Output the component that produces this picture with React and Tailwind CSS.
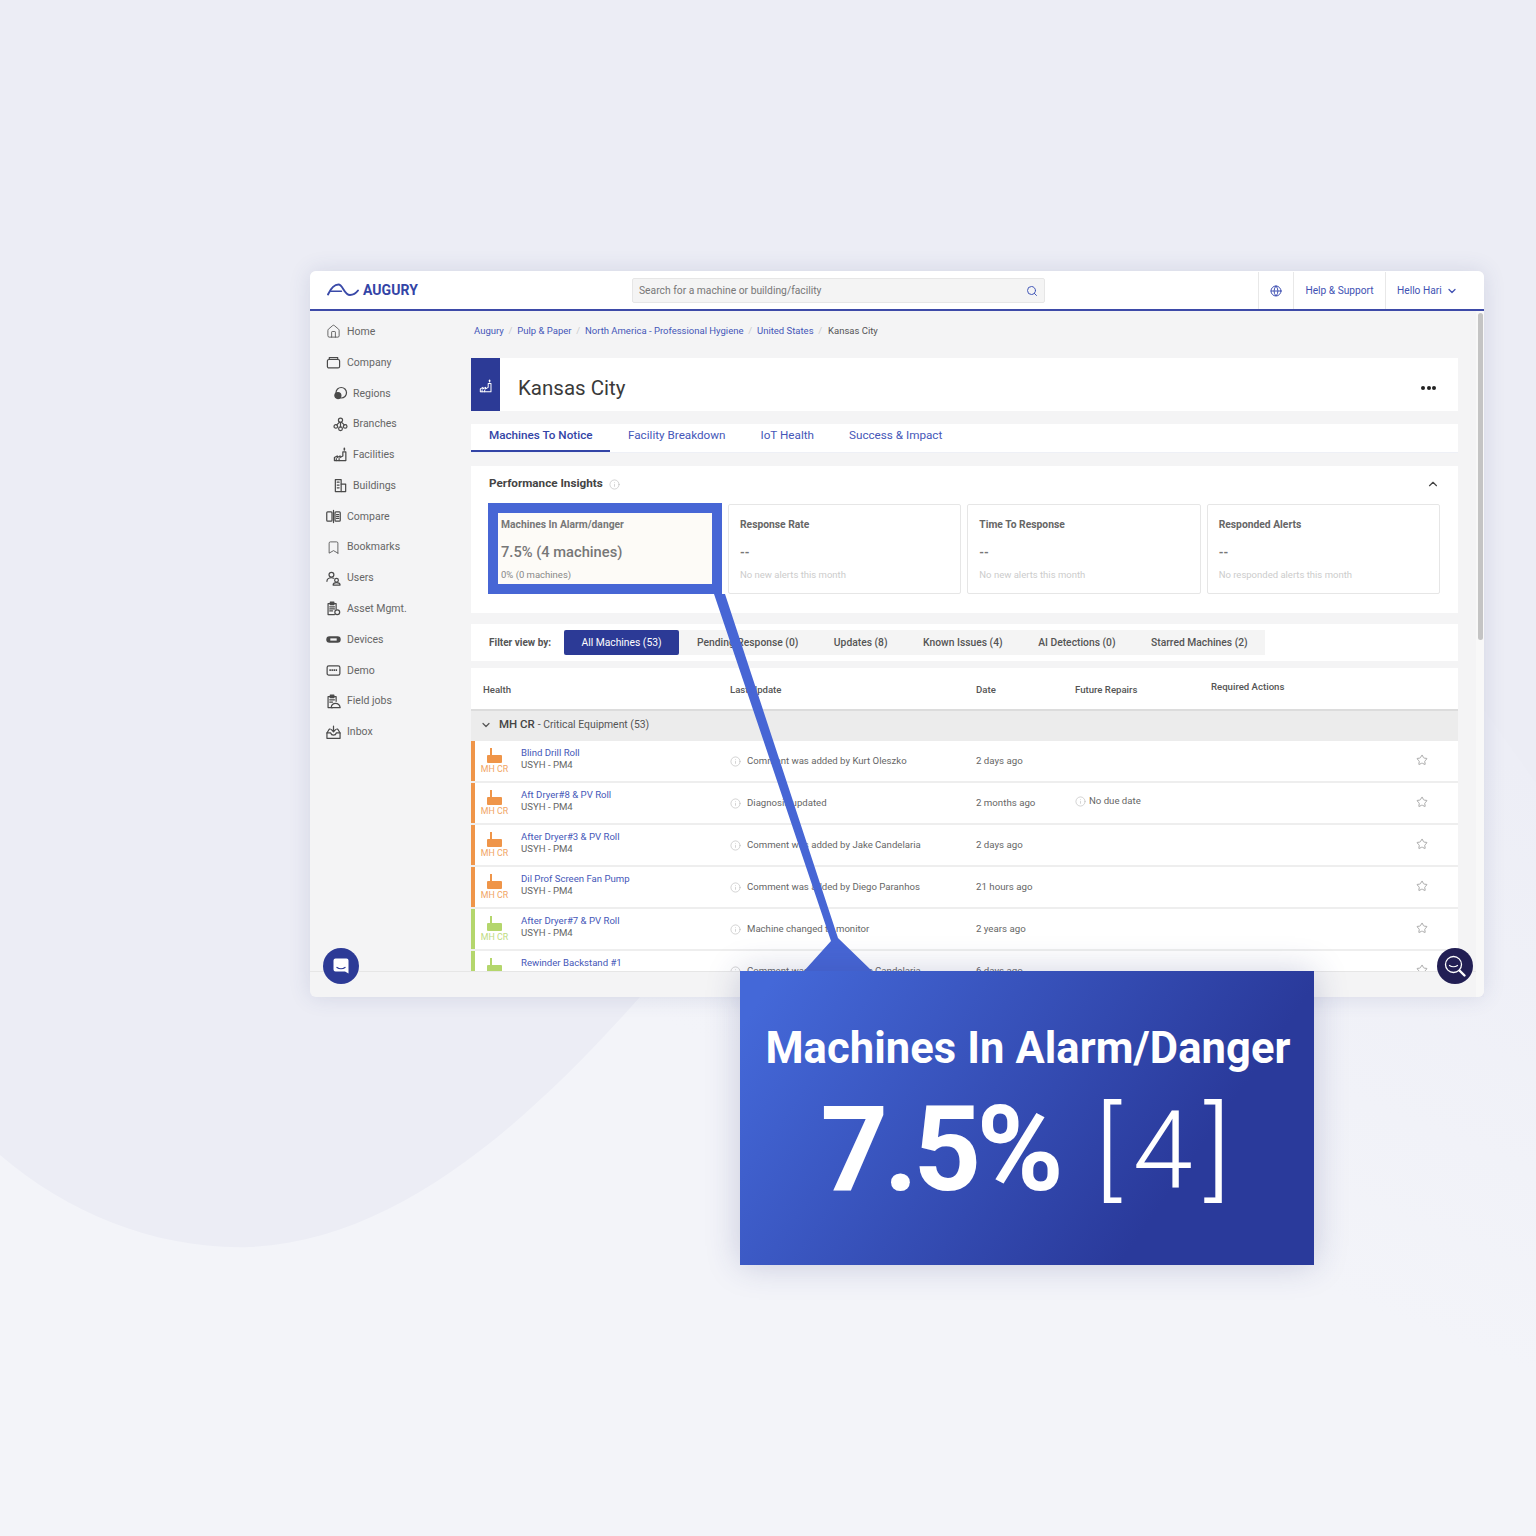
import { Bookmark, ChevronDown, ChevronUp, Globe, House, Info, Search, Star } from 'lucide-react';

const FONT = "font-['Roboto',sans-serif]";

const line = { fill: 'none', stroke: 'currentColor', strokeWidth: 1.15, strokeLinejoin: 'round', strokeLinecap: 'round' };

function Briefcase(props) {
  return (
    <svg viewBox="0 0 16 16" {...line} {...props}>
      <rect x="1.5" y="4.8" width="13" height="9" rx="1.6" />
      <path d="M3.5 4.8V2.8h9v2" />
    </svg>
  );
}

function Regions(props) {
  return (
    <svg viewBox="0 0 16 16" {...line} {...props}>
      <circle cx="8.8" cy="7.2" r="5.6" />
      <circle cx="5.2" cy="10.2" r="3.2" fill="currentColor" />
    </svg>
  );
}

function Branches(props) {
  return (
    <svg viewBox="0 0 16 16" {...line} {...props}>
      <circle cx="8" cy="3.4" r="2.2" />
      <circle cx="3" cy="10" r="1.9" />
      <circle cx="13" cy="10" r="1.9" />
      <circle cx="8" cy="12.6" r="2" />
      <path d="M7 5.4 4 8.4M9 5.4l3 3M8 5.6v5" />
    </svg>
  );
}

function Factory(props) {
  return (
    <svg viewBox="0 0 16 16" {...line} {...props}>
      <path d="M1.5 14.5v-3.2l3-1.8v1.8l3-1.8v1.8l3-1.8V5.2h3.2v9.3z" />
      <path d="M12.1 1.5v1.6" strokeWidth="1.7" />
      <path d="M3.5 12.5v2M6.5 12.5v2" />
    </svg>
  );
}

function Buildings(props) {
  return (
    <svg viewBox="0 0 16 16" {...line} {...props}>
      <path d="M2.5 14.5V1.8h6.2v12.7z" />
      <path d="M8.7 6.5h4.8v8H8.7" />
      <path d="M4.5 4.5h2M4.5 7.5h2M4.5 10.5h2" />
    </svg>
  );
}

function Compare(props) {
  return (
    <svg viewBox="0 0 16 16" {...line} {...props}>
      <rect x="0.8" y="3" width="5.6" height="10" rx="1" />
      <rect x="9.6" y="3" width="5.6" height="10" rx="1" />
      <path d="M8 1.5v13M11.2 6h2.4M11.2 8h2.4M11.2 10h2.4" />
    </svg>
  );
}

function Users(props) {
  return (
    <svg viewBox="0 0 16 16" {...line} {...props}>
      <circle cx="5.8" cy="4" r="2.6" />
      <path d="M1 11c0-2.4 2-3.8 4.8-3.8 1 0 1.8.2 2.4.5" />
      <circle cx="11.2" cy="9.8" r="2" />
      <path d="M7.6 15c0-1.7 1.5-2.6 3.6-2.6s3.8.9 3.8 2.6z" />
    </svg>
  );
}

function Asset(props) {
  return (
    <svg viewBox="0 0 16 16" {...line} {...props}>
      <path d="M9 14.5H2.2V2.8h8.6v6" />
      <rect x="4.6" y="1.2" width="3.8" height="2.6" fill="currentColor" />
      <path d="M4 6.2h5M4 8.4h5M4 10.6h3" />
      <circle cx="12" cy="12" r="2.6" />
    </svg>
  );
}

function Device(props) {
  return (
    <svg viewBox="0 0 16 16" fill="currentColor" {...props}>
      <rect x="0.3" y="4.6" width="15.4" height="6.8" rx="3.4" />
      <rect x="4.6" y="6.8" width="6.8" height="2.4" fill="#f4f4f5" />
    </svg>
  );
}

function Demo(props) {
  return (
    <svg viewBox="0 0 16 16" {...line} {...props}>
      <rect x="1.2" y="3" width="13.6" height="10" rx="1.8" />
      <path d="M3.6 7.6h8.8" strokeWidth="1.7" strokeDasharray="1.6 .6" strokeLinecap="butt" />
    </svg>
  );
}

function FieldJobs(props) {
  return (
    <svg viewBox="0 0 16 16" {...line} {...props}>
      <path d="M7 14.5H2.2V2.8h8.6v5" />
      <rect x="4.6" y="1.2" width="3.8" height="2.6" fill="currentColor" />
      <path d="M4 6.2h5M4 8.6h3" />
      <path d="M5.5 14.5c.4-2.8 2.2-4.4 4.6-4.4s4.5 1.6 5 4.4z" />
    </svg>
  );
}

function InboxTray(props) {
  return (
    <svg viewBox="0 0 16 16" {...line} {...props}>
      <path d="M4.5 4.5H3.4L1 8.5v5.7h14V8.5l-2.4-4h-1.1" />
      <path d="M1 8.5h4c.4 1.5 1.5 2.3 3 2.3s2.6-.8 3-2.3h4" />
      <path d="M8 1.2v6M5.8 5 8 7.2 10.2 5" />
    </svg>
  );
}

function Hopper({ color }) {
  return (
    <svg width="15" height="15" viewBox="0 0 15 15" fill={color}>
      <rect x="3" y="0" width="2" height="8" />
      <rect x="0" y="7" width="15" height="8" rx="1" />
    </svg>
  );
}

const NAV = [
  { label: 'Home', icon: House },
  { label: 'Company', icon: Briefcase },
  { label: 'Regions', icon: Regions, sub: true },
  { label: 'Branches', icon: Branches, sub: true },
  { label: 'Facilities', icon: Factory, sub: true },
  { label: 'Buildings', icon: Buildings, sub: true },
  { label: 'Compare', icon: Compare },
  { label: 'Bookmarks', icon: Bookmark },
  { label: 'Users', icon: Users },
  { label: 'Asset Mgmt.', icon: Asset },
  { label: 'Devices', icon: Device },
  { label: 'Demo', icon: Demo },
  { label: 'Field jobs', icon: FieldJobs },
  { label: 'Inbox', icon: InboxTray },
];

const CRUMBS = ['Augury', 'Pulp & Paper', 'North America - Professional Hygiene', 'United States'];

const INSIGHTS = [
  { title: 'Response Rate', note: 'No new alerts this month' },
  { title: 'Time To Response', note: 'No new alerts this month' },
  { title: 'Responded Alerts', note: 'No responded alerts this month' },
];

const ROWS = [
  { name: 'Blind Drill Roll', update: 'Comment was added by Kurt Oleszko', date: '2 days ago', color: '#ef9549' },
  { name: 'Aft Dryer#8 & PV Roll', update: 'Diagnosis updated', date: '2 months ago', color: '#ef9549', due: true },
  { name: 'After Dryer#3 & PV Roll', update: 'Comment was added by Jake Candelaria', date: '2 days ago', color: '#ef9549' },
  { name: 'Dil Prof Screen Fan Pump', update: 'Comment was added by Diego Paranhos', date: '21 hours ago', color: '#ef9549' },
  { name: 'After Dryer#7 & PV Roll', update: 'Machine changed to monitor', date: '2 years ago', color: '#b4d66c' },
  { name: 'Rewinder Backstand #1', update: 'Comment was added by Jake Candelaria', date: '6 days ago', color: '#b4d66c' },
];

function Header() {
  return (
    <header className="flex h-[40px] shrink-0 items-center border-b-2 border-[#3d4aa8] bg-white">
      <div className="flex w-[322px] shrink-0 items-center pl-[17px]">
        <svg width="32" height="14" viewBox="0 0 32 14" fill="none" stroke="#3a4aa8" strokeWidth="1.9" strokeLinecap="round">
          <path d="M1 11.5C4 5 8 1.5 11.5 1.5 16 1.5 17 12 23 12c3.2 0 6-1.8 8-4.5" />
          <path d="M3.5 8.2h11" strokeWidth="1.4" />
        </svg>
        <span className="ml-[4px] text-[14px] font-bold leading-none tracking-[0.05px] text-[#3344a6]">AUGURY</span>
      </div>
      <div className="flex h-[25px] w-[413px] items-center justify-between rounded-[2px] border border-[#e6e6e6] bg-[#f4f4f4] px-[6px] pt-[1px]">
        <span className="text-[10.3px] text-[#777]">Search for a machine or building/facility</span>
        <Search size={12} className="text-[#4358b8]" />
      </div>
      <div className="ml-auto flex h-full items-center pt-[1px] text-[10.2px] text-[#4152b3]">
        <div className="flex h-full w-[35px] items-center justify-center border-l border-[#e8e8e8]">
          <Globe size={12} />
        </div>
        <div className="flex h-full w-[92px] items-center justify-center border-l border-[#e8e8e8]">Help &amp; Support</div>
        <div className="flex h-full w-[99px] items-center gap-[4px] border-l border-[#e8e8e8] pl-[11px]">
          Hello Hari
          <ChevronDown size={12} strokeWidth={2.5} />
        </div>
      </div>
    </header>
  );
}

function Sidebar() {
  return (
    <aside className="flex w-[161px] shrink-0 flex-col pt-[5.4px] text-[10.5px] text-[#666]">
      {NAV.map((item) => {
        const Icon = item.icon;
        return (
          <div
            key={item.label}
            className={`flex h-[30.8px] items-center ${item.sub ? 'gap-[5px] pl-[23px]' : 'gap-[6px] pl-[16px]'}`}
          >
            <Icon width={15} height={15} strokeWidth={1.3} className="shrink-0 text-[#4a4a4a]" />
            <span>{item.label}</span>
          </div>
        );
      })}
    </aside>
  );
}

function Insight({ title, note }) {
  return (
    <div className="mt-[1px] h-[90px] flex-1 rounded-[2px] border-[1.5px] border-[#e6e6e6] px-[11px] pt-[12.5px]">
      <div className="text-[10.3px] font-bold leading-[14px] text-[#666]">{title}</div>
      <div className="mt-[14px] text-[12px] font-bold leading-[14px] text-[#777]">--</div>
      <div className="mt-[8px] text-[9.5px] leading-[14px] text-[#ccc]">{note}</div>
    </div>
  );
}

function Row({ row }) {
  return (
    <div className="flex h-[42px] shrink-0 items-stretch border-b-2 border-[#eeeeee]">
      <div className="w-[4px] shrink-0" style={{ backgroundColor: row.color }} />
      <div className="flex w-[39px] shrink-0 flex-col items-center pt-[7px]">
        <Hopper color={row.color} />
        <span className="mt-[2px] text-[8.8px] leading-[9px] opacity-85" style={{ color: row.color }}>MH CR</span>
      </div>
      <div className="flex w-[216px] shrink-0 flex-col justify-center pb-[5px] pl-[7px] text-[9.6px] leading-[12px]">
        <span className="text-[#4557b8]">{row.name}</span>
        <span className="text-[#666]">USYH - PM4</span>
      </div>
      <div className="flex w-[246px] shrink-0 items-center gap-[6px] text-[9.6px] text-[#666]">
        <Info size={11} strokeWidth={1.4} className="text-[#bbb]" />
        {row.update}
      </div>
      <div className="flex w-[99px] shrink-0 items-center text-[9.7px] text-[#666]">{row.date}</div>
      <div className="flex flex-1 items-center gap-[3px] pb-[4px] text-[9.6px] text-[#666]">
        {row.due && (
          <>
            <Info size={11} strokeWidth={1.4} className="text-[#bbb]" />
            No due date
          </>
        )}
      </div>
      <div className="flex w-[42px] shrink-0 items-center pb-[3px]">
        <Star size={12} className="text-[#aaa]" />
      </div>
    </div>
  );
}

function Main() {
  return (
    <main className="min-w-0 flex-1 pr-[26px]">
      <nav className="mb-[6px] flex h-[41px] items-center pl-[3px] text-[9.5px]">
        {CRUMBS.map((crumb) => (
          <span key={crumb} className="flex text-[#4557b8]">
            {crumb}
            <span className="mx-[4.8px] text-[#ccc]">/</span>
          </span>
        ))}
        <span className="ml-[1px] text-[#555]">Kansas City</span>
      </nav>

      <section className="flex h-[53px] items-center bg-white">
        <div className="flex h-full w-[29px] items-center justify-center bg-[#2c3a96] pt-[3px] text-white">
          <Factory width={14} height={14} />
        </div>
        <h1 className="ml-[18px] mt-[8px] text-[20.5px] leading-none text-[#3a3a3a]">Kansas City</h1>
        <div className="ml-auto mr-[22px] mt-[6px] flex gap-[1.5px]">
          <span className="h-[4px] w-[4px] rounded-full bg-[#222]" />
          <span className="h-[4px] w-[4px] rounded-full bg-[#222]" />
          <span className="h-[4px] w-[4px] rounded-full bg-[#222]" />
        </div>
      </section>

      <div className="mt-[13px] flex h-[29px] border-b border-[#eef0f6] bg-white text-[11.7px] text-[#4557b8]">
        <div className="w-[139px] border-b-2 border-[#3344a6] pl-[18px] pt-[3px] font-medium text-[#3344a6]">Machines To Notice</div>
        <div className="ml-[18px] pt-[3px]">Facility Breakdown</div>
        <div className="ml-[35px] pt-[3px]">IoT Health</div>
        <div className="ml-[35px] pt-[3px]">Success &amp; Impact</div>
      </div>

      <section className="mt-[13px] h-[147px] bg-white pl-[17px] pr-[18px] pt-[11px]">
        <div className="flex h-[14px] items-center pl-[1px]">
          <span className="text-[11.7px] font-bold text-[#444]">Performance Insights</span>
          <Info size={11} strokeWidth={1.4} className="ml-[6px] text-[#bbb]" />
          <ChevronUp size={14} strokeWidth={2} className="ml-auto text-[#444]" />
        </div>
        <div className="mt-[12px] flex gap-[6px]">
          <div className="h-[91px] w-[234px] shrink-0 border-[10px] border-[#4766d5] bg-[#fdfbf7] pl-[3px] pt-[5px]">
            <div className="text-[10.3px] font-bold leading-[14px] text-[#777]">Machines In Alarm/danger</div>
            <div className="mt-[10px] text-[14.7px] font-medium leading-[20px] text-[#777]">7.5% (4 machines)</div>
            <div className="mt-[7px] text-[9.5px] leading-[12px] text-[#888]">0% (0 machines)</div>
          </div>
          <Insight {...INSIGHTS[0]} />
          <Insight {...INSIGHTS[1]} />
          <Insight {...INSIGHTS[2]} />
        </div>
      </section>

      <section className="mt-[11px] flex h-[37px] items-center bg-white pl-[18px] text-[10.3px] text-[#555]">
        <span className="w-[75px] text-[10px] font-bold">Filter view by:</span>
        <div className="flex h-[25px] items-center bg-[#f4f4f4] pr-[17px]">
          <span className="flex h-full w-[115px] items-center justify-center rounded-[2px] bg-[#2c3a96] text-white">All Machines (53)</span>
          <span className="ml-[18px] font-medium">Pending Response (0)</span>
          <span className="ml-[35.5px] font-medium">Updates (8)</span>
          <span className="ml-[35.5px] font-medium">Known Issues (4)</span>
          <span className="ml-[35.5px] font-medium">AI Detections (0)</span>
          <span className="ml-[35.5px] font-medium">Starred Machines (2)</span>
        </div>
      </section>

      <section className="mt-[7px] bg-white">
        <div className="flex h-[41px] items-center pt-[3px] text-[9.6px] font-medium text-[#555]">
          <span className="w-[259px] pl-[12px]">Health</span>
          <span className="w-[246px]">Last Update</span>
          <span className="w-[99px]">Date</span>
          <span className="w-[136px]">Future Repairs</span>
          <span className="pb-[6px]">Required Actions</span>
        </div>
        <div className="flex h-[32px] items-center border-t-2 border-[#dcdcdc] bg-[#ececec] pb-[2px] pl-[9px] text-[#555]">
          <ChevronDown size={12} strokeWidth={2.4} />
          <span className="ml-[7px] text-[11.5px] font-medium text-[#444]">MH CR</span>
          <span className="ml-[3px] text-[10.4px]">- Critical Equipment (53)</span>
        </div>
        {ROWS.map((row) => (
          <Row key={row.name} row={row} />
        ))}
      </section>
    </main>
  );
}

function Callout() {
  return (
    <>
      <svg className="absolute left-0 top-0" width="1536" height="1536" viewBox="0 0 1536 1536">
        <path d="M714 594h11l113 344 34 33h-68l27-30z" fill="#4766d5" />
      </svg>
      <div className="absolute left-[740px] top-[971px] flex h-[294px] w-[574px] flex-col items-center bg-[linear-gradient(125deg,#4468d8_5%,#2a3a9b_75%)] text-white shadow-[0_0_32px_rgba(40,50,120,0.22)]">
        <div className="mt-[48px] pl-[2px] text-[43.5px] font-bold leading-[60px] tracking-[0.1px]">Machines In Alarm/Danger</div>
        <div className="mt-[6px] flex items-center pl-[8px] leading-[130px]">
          <span className="text-[118px] font-bold tracking-[-4.5px]">7.5%</span>
          <span className="ml-[36px] text-[108px] font-light tracking-[11.5px]">[4]</span>
        </div>
      </div>
    </>
  );
}

export default function App() {
  return (
    <div className={`relative h-[1536px] w-[1536px] overflow-hidden bg-[#ecedf5] ${FONT}`}>
      <svg className="absolute left-0 top-0" width="1536" height="1536" viewBox="0 0 1536 1536">
        <defs>
          <linearGradient id="sweep" gradientUnits="userSpaceOnUse" x1="1510" y1="760" x2="1300" y2="1280">
            <stop offset="0" stopColor="#edeef6" />
            <stop offset="1" stopColor="#f3f4f9" />
          </linearGradient>
        </defs>
        <path d="M0 1155C70 1215 160 1250 250 1247C400 1240 530 1120 640 997H1484V710L1536 783V1536H0Z" fill="url(#sweep)" />
      </svg>

      {/* the app window sits on the canvas */}
      <div className="absolute left-[310px] top-[271px] flex h-[726px] w-[1174px] flex-col overflow-hidden rounded-[6px] bg-[#f4f4f5] shadow-[0_0_22px_rgba(60,70,130,0.14)]">
        <Header />
        <div className="flex h-[660px] shrink-0 overflow-hidden">
          <Sidebar />
          <Main />
        </div>
        <div className="flex-1 border-t border-[#e6e6e6]" />
        <div className="absolute bottom-0 right-0 top-[40px] w-[8px] bg-[#f8f8f8]" />
        <div className="absolute right-[1px] top-[42px] h-[327px] w-[5px] rounded-full bg-[#c4c4c4]" />
      </div>

      <div className="absolute left-[323px] top-[948px] flex h-[36px] w-[36px] items-center justify-center rounded-full bg-[#2c3a96]">
        <svg width="18" height="18" viewBox="0 0 18 18">
          <path d="M3.5 1.5h11a2 2 0 0 1 2 2v13l-3.5-2H3.5a2 2 0 0 1-2-2v-9a2 2 0 0 1 2-2z" fill="#fff" />
          <path d="M5 10.5c2.2 1.6 5.8 1.6 8 0" fill="none" stroke="#2c3a96" strokeWidth="1.3" strokeLinecap="round" />
        </svg>
      </div>
      <div className="absolute left-[1437px] top-[948px] flex h-[36px] w-[36px] items-center justify-center rounded-full bg-[#221f54]">
        <svg width="24" height="24" viewBox="0 0 24 24" fill="none" stroke="#fff" strokeLinecap="round">
          <circle cx="10.5" cy="10.5" r="8" strokeWidth="1.3" />
          <path d="M6.5 11.5c2.2 1.6 5.8 1.6 8 0" strokeWidth="1.2" />
          <path d="M16.5 16.5l5 5" strokeWidth="2.4" />
        </svg>
      </div>

      <Callout />
    </div>
  );
}
